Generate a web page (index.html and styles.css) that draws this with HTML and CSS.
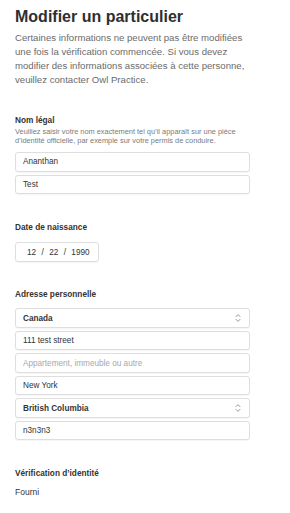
FILE: index.html
```html
<!DOCTYPE html>
<html lang="fr">
<head>
<meta charset="utf-8">
<title>Modifier un particulier</title>
<link rel="stylesheet" href="styles.css">
</head>
<body>
<main class="page">
  <h1 class="title">Modifier un particulier</h1>
  <p class="intro">Certaines informations ne peuvent pas être modifiées une fois la vérification commencée. Si vous devez modifier des informations associées à cette personne, veuillez contacter Owl Practice.</p>

  <section class="section">
    <h2 class="label with-help">Nom légal</h2>
    <p class="help">Veuillez saisir votre nom exactement tel qu’il apparaît sur une pièce d’identité officielle, par exemple sur votre permis de conduire.</p>
    <div class="fields">
      <input class="field" type="text" value="Ananthan">
      <input class="field" type="text" value="Test">
    </div>
  </section>

  <section class="section">
    <h2 class="label">Date de naissance</h2>
    <div class="date">
      <span>12</span><span>/</span><span>22</span><span>/</span><span>1990</span>
    </div>
  </section>

  <section class="section">
    <h2 class="label">Adresse personnelle</h2>
    <div class="fields">
      <div class="field select">
        <span>Canada</span>
        <svg class="chev" viewBox="0 0 6 10" width="6" height="10" aria-hidden="true"><polyline points="1,3.6 3,1.6 5,3.6"/><polyline points="1,6.4 3,8.4 5,6.4"/></svg>
      </div>
      <input class="field" type="text" value="111 test street">
      <input class="field" type="text" placeholder="Appartement, immeuble ou autre">
      <input class="field" type="text" value="New York">
      <div class="field select">
        <span>British Columbia</span>
        <svg class="chev" viewBox="0 0 6 10" width="6" height="10" aria-hidden="true"><polyline points="1,3.6 3,1.6 5,3.6"/><polyline points="1,6.4 3,8.4 5,6.4"/></svg>
      </div>
      <input class="field" type="text" value="n3n3n3">
    </div>
  </section>

  <section class="section">
    <h2 class="label">Vérification d’identité</h2>
    <p class="value">Fourni</p>
  </section>
</main>
</body>
</html>
```

FILE: styles.css
```css
* { box-sizing: border-box; }

html, body {
  margin: 0;
  background: #ffffff;
}

body {
  font-family: "Liberation Sans", Arial, sans-serif;
  color: #333333;
}

.page {
  width: 235px;
  margin-left: 15px;
  padding-top: 8px;
}

.title {
  margin: 0;
  font-size: 16px;
  line-height: 18px;
  font-weight: 700;
  color: #2f2f2f;
}

.intro {
  margin: 4.5px 0 0;
  font-size: 9.6px;
  line-height: 14.3px;
  color: #6b6b6b;
}

.section {
  margin-top: 28.5px;
}

.label {
  margin: 0 0 8px;
  font-size: 8.25px;
  line-height: 10px;
  font-weight: 700;
  color: #333333;
}

.label.with-help {
  margin-bottom: 2px;
}

.help {
  margin: 0 0 7px;
  font-size: 7.4px;
  line-height: 8.5px;
  color: #7a7a7a;
}

.fields {
  display: flex;
  flex-direction: column;
  gap: 3px;
}

.field {
  display: block;
  width: 100%;
  height: 19.5px;
  margin: 0;
  padding: 0 7px;
  border: 1px solid #dedede;
  border-radius: 3px;
  background: #ffffff;
  box-shadow: 0 1px 1px rgba(0, 0, 0, 0.04);
  font-family: "Liberation Sans", Arial, sans-serif;
  font-size: 8.2px;
  color: #333333;
  outline: none;
}

.field::placeholder {
  color: #a8a8a8;
}

.select {
  display: flex;
  align-items: center;
  justify-content: space-between;
  font-weight: 700;
  padding-right: 8px;
}

.chev {
  width: 6px;
  height: 10px;
  fill: none;
  stroke: #8a8a8a;
  stroke-width: 0.9;
  stroke-linecap: round;
  stroke-linejoin: round;
}

.date {
  display: inline-flex;
  align-items: center;
  gap: 5.4px;
  width: 84px;
  height: 19.5px;
  padding: 0 0 0 11px;
  border: 1px solid #dedede;
  border-radius: 3px;
  box-shadow: 0 1px 1px rgba(0, 0, 0, 0.04);
  font-size: 8.2px;
  color: #333333;
}

.value {
  margin: 0;
  font-size: 8.5px;
  line-height: 10px;
  color: #333333;
}
```
